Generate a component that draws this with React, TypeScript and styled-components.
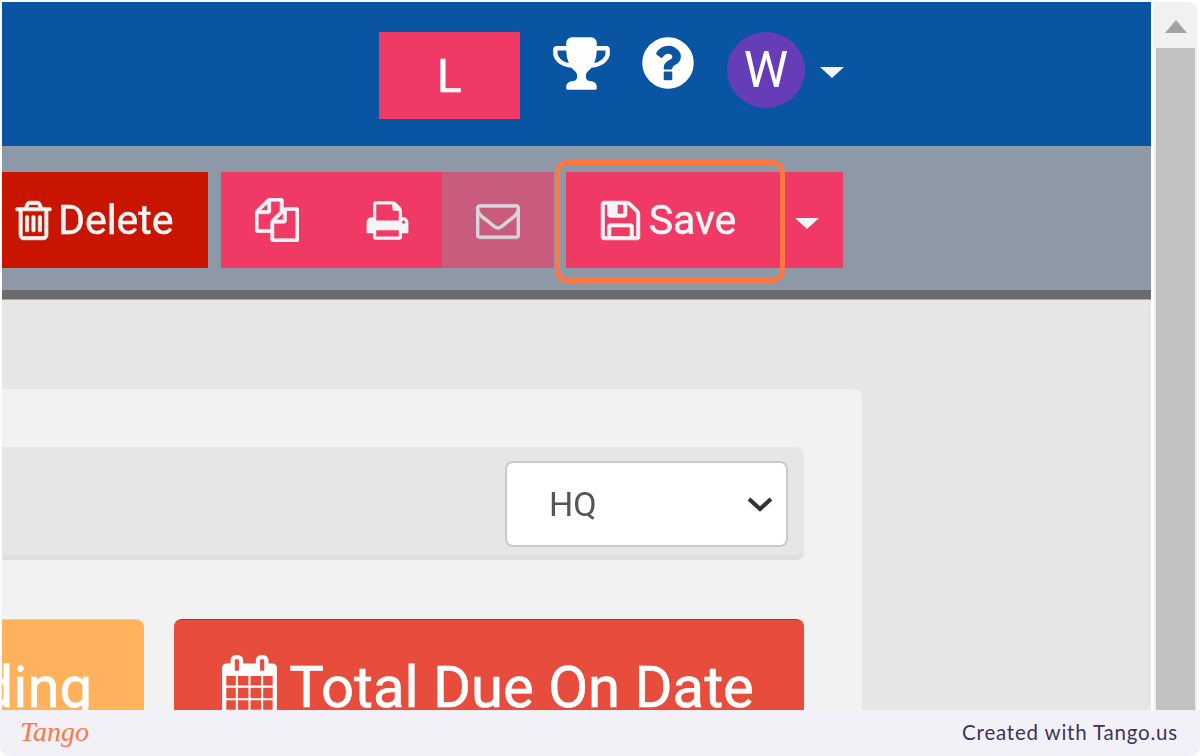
import React from "react";
import styled, { createGlobalStyle } from "styled-components";

const Global = createGlobalStyle`
  html, body { margin: 0; padding: 0; background: #fff; }
  * { box-sizing: border-box; }
`;

const Frame = styled.div`
  position: relative;
  width: 1200px;
  height: 756px;
  display: flex;
  flex-direction: column;
  overflow: hidden;
  background: #fff;
  font-family: Roboto, "Liberation Sans", sans-serif;
`;
const Shot = styled.div`
  height: 710px;
  display: flex;
  padding: 2px 0 0 2px;
  filter: blur(0.6px);
`;
const Main = styled.div`
  width: 1149px;
  display: flex;
  flex-direction: column;
  overflow: hidden;
  background: #e6e6e6;
`;
const Gutter = styled.div`
  width: 3px;
  background: #fff;
`;
const Scrollbar = styled.div`
  width: 43px;
  display: flex;
  flex-direction: column;
  background: #f1f1f1;
  border-radius: 0 8px 0 0;
`;
const ScrollUp = styled.div`
  height: 46px;
  padding-top: 18px;
  display: flex;
  align-items: flex-start;
  justify-content: center;
  &::before {
    content: "";
    border-left: 11px solid transparent;
    border-right: 11px solid transparent;
    border-bottom: 13px solid #a3a3a3;
  }
`;
const Thumb = styled.div`
  flex: 1;
  margin: 0 2px;
  background: #c1c1c1;
`;
const Header = styled.header`
  height: 144px;
  flex: none;
  display: flex;
  align-items: flex-start;
  padding: 30px 0 0 377px;
  background: #0955a3;
`;
const Letter = styled.div`
  width: 141px;
  height: 87px;
  display: flex;
  align-items: center;
  justify-content: center;
  background: #f03a65;
  color: #fff;
  font-size: 46px;
  -webkit-text-stroke: 0.5px #fff;
`;
const TrophySlot = styled.span`
  display: flex;
  margin: 1px 0 0 31px;
  color: #fff;
`;
const HelpSlot = styled.span`
  display: flex;
  margin: 1px 0 0 26px;
  color: #fff;
`;
const Avatar = styled.div`
  width: 78px;
  height: 76px;
  margin-left: 29px;
  border-radius: 50%;
  display: flex;
  align-items: center;
  justify-content: center;
  background: #663db8;
  color: #fff;
  font-size: 50px;
`;
const Caret = styled.span<{ $top: number }>`
  width: 0;
  height: 0;
  margin-top: ${(p) => p.$top}px;
  border-left: 12px solid transparent;
  border-right: 12px solid transparent;
  border-top: 11px solid #f2f4f5;
`;
const HeaderCaret = styled(Caret)`
  margin-left: 15px;
`;
const Toolbar = styled.div`
  height: 144px;
  flex: none;
  display: flex;
  align-items: flex-start;
  padding-top: 26px;
  background: #8d99a6;
`;
const Rule = styled.div`
  height: 10px;
  flex: none;
  background: #6b6b6b;
  border-bottom: 1px solid #a8a8a8;
`;
const Btn = styled.div<{ $w: number; $gap?: number }>`
  width: ${(p) => p.$w}px;
  height: 96px;
  margin-left: ${(p) => p.$gap ?? 0}px;
  display: flex;
  align-items: center;
  justify-content: center;
  background: #f03a65;
  color: #f2f4f5;
  font-size: 41px;
  -webkit-text-stroke: 0.5px #f2f4f5;
`;
const DeleteBtn = styled(Btn)`
  justify-content: flex-start;
  gap: 2px;
  padding-left: 9px;
  background: #c91400;
`;
const MailBtn = styled(Btn)`
  background: #c95c7d;
  color: #d5d5da;
`;
const SaveBtn = styled(Btn)`
  gap: 6px;
  padding-right: 12px;
`;
const CaretBtn = styled(Btn)`
  padding-right: 10px;
`;
const Glyph = styled.svg<{ $s: number; $bold?: number }>`
  width: ${(p) => p.$s}px;
  height: ${(p) => p.$s}px;
  flex: none;
  fill: currentColor;
  stroke: currentColor;
  stroke-width: ${(p) => p.$bold ?? 0};
`;
const Body = styled.div`
  flex: 1;
  min-height: 0;
  padding: 89px 0 0;
`;
const Card = styled.section`
  width: 890px;
  height: 400px;
  margin-left: -30px;
  padding: 58px 58px 0 0;
  background: #f2f2f2;
  border-radius: 8px;
`;
const FilterBar = styled.div`
  height: 113px;
  display: flex;
  justify-content: flex-end;
  padding: 14px 16px 0 0;
  background: #e6e6e6;
  border-bottom: 5px solid #dfdfdf;
  border-radius: 8px;
`;
const SelectBox = styled.div`
  width: 283px;
  height: 86px;
  display: flex;
  align-items: center;
  justify-content: space-between;
  padding: 0 13px 0 42px;
  background: #fff;
  border: 2px solid #c9c9c9;
  border-radius: 8px;
  color: #555;
  font-size: 34px;
`;
const Chevron = styled.svg`
  width: 26px;
  height: 17px;
  fill: none;
  stroke: #333;
  stroke-width: 4;
`;
const Tiles = styled.div`
  display: flex;
  gap: 30px;
  margin-top: 59px;
`;
const Tile = styled.div<{ $bg: string; $edge: string; $w: number }>`
  width: ${(p) => p.$w}px;
  height: 150px;
  flex: none;
  display: flex;
  justify-content: center;
  gap: 10px;
  padding: 33px 4px 0 0;
  overflow: hidden;
  background: ${(p) => p.$bg};
  border-top: 1px solid ${(p) => p.$edge};
  border-radius: 8px;
  color: #fff;
  font-size: 58px;
  line-height: 68px;
  white-space: nowrap;
  -webkit-text-stroke: 0.6px #fff;
`;
const PendingTile = styled(Tile)`
  justify-content: flex-end;
  padding-right: 52px;
`;
const CalendarSlot = styled.span`
  display: flex;
  margin-top: 2px;
`;
const Highlight = styled.div`
  position: absolute;
  left: 555px;
  top: 160px;
  width: 230px;
  height: 123px;
  border: 5px solid #ff7843;
  border-radius: 13px;
`;
const Footer = styled.footer`
  height: 46px;
  flex: none;
  display: flex;
  align-items: center;
  justify-content: space-between;
  padding: 0 22px 2px 20px;
  background: #f3f1f8;
  border-radius: 0 0 10px 10px;
`;
const Logo = styled.span`
  font-family: "Liberation Serif", serif;
  font-style: italic;
  font-size: 28px;
  color: #ff7843;
`;
const Credit = styled.span`
  font-family: Lato, sans-serif;
  font-size: 20.5px;
  letter-spacing: 0.8px;
  color: #3f3359;
`;

const TRASH = "M704 736v576q0 14-9 23t-23 9h-64q-14 0-23-9t-9-23v-576q0-14 9-23t23-9h64q14 0 23 9t9 23zm256 0v576q0 14-9 23t-23 9h-64q-14 0-23-9t-9-23v-576q0-14 9-23t23-9h64q14 0 23 9t9 23zm256 0v576q0 14-9 23t-23 9h-64q-14 0-23-9t-9-23v-576q0-14 9-23t23-9h64q14 0 23 9t9 23zm128 724v-948h-896v948q0 22 7 40.5t14.5 27 10.5 8.5h832q3 0 10.5-8.5t14.5-27 7-40.5zm-672-1076h448l-48-117q-7-9-17-11h-317q-10 2-17 11zm928 32v64q0 14-9 23t-23 9h-96v948q0 83-47 143.5t-113 60.5h-832q-66 0-113-58.5t-47-141.5v-952h-96q-14 0-23-9t-9-23v-64q0-14 9-23t23-9h309l70-167q15-37 54-63t79-26h320q40 0 79 26t54 63l70 167h309q14 0 23 9t9 23z";
const FILES = "M1696 384q40 0 68 28t28 68v1216q0 40-28 68t-68 28h-960q-40 0-68-28t-28-68v-288h-544q-40 0-68-28t-28-68v-672q0-40 20-88t48-76l408-408q28-28 76-48t88-20h416q40 0 68 28t28 68v328q68-40 128-40h416zm-544 213l-299 299h299v-299zm-640-384l-299 299h299v-299zm196 647l316-316v-416h-384v416q0 40-28 68t-68 28h-416v640h512v-256q0-40 20-88t48-76zm956 804v-1152h-384v416q0 40-28 68t-68 28h-416v640h896z";
const SAVE = "M512 1536h768v-384h-768v384zm896 0h128v-896q0-14-10-38.5t-20-34.5l-281-281q-10-10-34-20t-39-10v416q0 40-28 68t-68 28h-576q-40 0-68-28t-28-68v-416h-128v1280h128v-416q0-40 28-68t68-28h832q40 0 68 28t28 68v416zm-384-928v-320q0-13-9.5-22.5t-22.5-9.5h-192q-13 0-22.5 9.5t-9.5 22.5v320q0 13 9.5 22.5t22.5 9.5h192q13 0 22.5-9.5t9.5-22.5zm640 32v928q0 40-28 68t-68 28h-1344q-40 0-68-28t-28-68v-1344q0-40 28-68t68-28h928q40 0 88 20t76 48l280 280q28 28 48 76t20 88z";
const CAL = "M192 1664h288v-288h-288v288zm352 0h320v-288h-320v288zm-352-352h288v-320h-288v320zm352 0h320v-320h-320v320zm-352-384h288v-288h-288v288zm736 736h320v-288h-320v288zm-384-736h320v-288h-320v288zm768 736h288v-288h-288v288zm-384-352h320v-320h-320v320zm-352-864v-288q0-13-9.5-22.5t-22.5-9.5h-64q-13 0-22.5 9.5t-9.5 22.5v288q0 13 9.5 22.5t22.5 9.5h64q13 0 22.5-9.5t9.5-22.5zm736 864h288v-320h-288v320zm-384-384h320v-288h-320v288zm384 0h288v-288h-288v288zm32-480v-288q0-13-9.5-22.5t-22.5-9.5h-64q-13 0-22.5 9.5t-9.5 22.5v288q0 13 9.5 22.5t22.5 9.5h64q13 0 22.5-9.5t9.5-22.5zm384-64v1280q0 52-38 90t-90 38h-1408q-52 0-90-38t-38-90v-1280q0-52 38-90t90-38h128v-96q0-66 47-113t113-47h64q66 0 113 47t47 113v96h384v-96q0-66 47-113t113-47h64q66 0 113 47t47 113v96h128q52 0 90 38t38 90z";
const PRINT = "M448 1536h896v-256h-896v256zm0-640h896v-384h-160q-40 0-68-28t-28-68v-160h-640v640zm1152 64q0-26-19-45t-45-19-45 19-19 45 19 45 45 19 45-19 19-45zm128 0v416q0 13-9.5 22.5t-22.5 9.5h-224v160q0 40-28 68t-68 28h-960q-40 0-68-28t-28-68v-160h-224q-13 0-22.5-9.5t-9.5-22.5v-416q0-79 56.5-135.5t135.5-56.5h64v-544q0-40 28-68t68-28h672q40 0 88 20t76 48l152 152q28 28 48 76t20 88v256h64q79 0 135.5 56.5t56.5 135.5z";
const MAIL = "M1664 1504v-768q-32 36-69 66-268 206-426 338-51 43-83 67t-86.5 48.5-102.5 24.5h-2q-48 0-102.5-24.5t-86.5-48.5-83-67q-158-132-426-338-37-30-69-66v768q0 13 9.5 22.5t22.5 9.5h1472q13 0 22.5-9.5t9.5-22.5zm0-1051v-24.5l-.5-13-3-12.5-5.5-9-9-7.5-14-2.5h-1472q-13 0-22.5 9.5t-9.5 22.5q0 168 147 284 193 152 401 317 6 5 35 29.5t46 37.5 44.5 31.5 50.5 27.5 43 9h2q20 0 43-9t50.5-27.5 44.5-31.5 46-37.5 35-29.5q208-165 401-317 54-43 100.5-115.5t46.5-131.5zm128-37v1088q0 66-47 113t-113 47h-1472q-66 0-113-47t-47-113v-1088q0-66 47-113t113-47h1472q66 0 113 47t47 113z";
const TROPHY = "M522 883q-74-162-74-371h-256v96q0 78 94.5 162t235.5 113zm1078-275v-96h-256q0 209-74 371 141-29 235.5-113t94.5-162zm128-128v128q0 71-41.5 143t-112 130-173 97.5-215.5 44.5q-42 54-95 95-38 34-52.5 72.5t-14.5 89.5q0 54 30.5 91t97.5 37q75 0 133.5 45.5t58.5 114.5v64q0 14-9 23t-23 9h-832q-14 0-23-9t-9-23v-64q0-69 58.5-114.5t133.5-45.5q67 0 97.5-37t30.5-91q0-51-14.5-89.5t-52.5-72.5q-53-41-95-95-113-5-215.5-44.5t-173-97.5-112-130-41.5-143v-128q0-40 28-68t68-28h288v-96q0-66 47-113t113-47h576q66 0 113 47t47 113v96h288q40 0 68 28t28 68z";
const HELP = "M1024 1376v-192q0-14-9-23t-23-9h-192q-14 0-23 9t-9 23v192q0 14 9 23t23 9h192q14 0 23-9t9-23zm256-672q0-88-55.5-163t-138.5-116-170-41q-243 0-371 213-15 24 8 42l132 100q7 6 19 6 16 0 25-12 53-68 86-92 34-24 86-24 48 0 85.5 26t37.5 59q0 38-20 61t-68 45q-63 28-115.5 86.5t-52.5 125.5v36q0 14 9 23t23 9h192q14 0 23-9t9-23q0-19 21.5-49.5t54.5-49.5q32-18 49-28.5t46-35 44.5-48 28-60.5 12.5-81zm384 192q0 209-103 385.5t-279.5 279.5-385.5 103-385.5-103-279.5-279.5-103-385.5 103-385.5 279.5-279.5 385.5-103 385.5 103 279.5 279.5 103 385.5z";

const Icon = ({ d, s, bold }: { d: string; s: number; bold?: number }) => (
  <Glyph $s={s} $bold={bold} viewBox="0 0 1792 1792"><path d={d} /></Glyph>
);

export default function App() {
  return (
    <Frame>
      <Global />
      <Shot>
        <Main>
          <Header>
            <Letter>L</Letter>
            <TrophySlot><Icon d={TROPHY} s={61} /></TrophySlot>
            <HelpSlot><Icon d={HELP} s={60} /></HelpSlot>
            <Avatar>W</Avatar>
            <HeaderCaret $top={35} />
          </Header>
          <Toolbar>
            <DeleteBtn $w={206}><Icon d={TRASH} s={45} bold={30} />Delete</DeleteBtn>
            <Btn $w={111} $gap={13}><Icon d={FILES} s={44} bold={30} /></Btn>
            <Btn $w={110}><Icon d={PRINT} s={45} /></Btn>
            <MailBtn $w={112}><Icon d={MAIL} s={44} bold={20} /></MailBtn>
            <SaveBtn $w={214} $gap={12}><Icon d={SAVE} s={45} bold={30} />Save</SaveBtn>
            <CaretBtn $w={63}><Caret $top={6} /></CaretBtn>
          </Toolbar>
          <Rule />
          <Body>
            <Card>
              <FilterBar>
                <SelectBox>
                  HQ
                  <Chevron viewBox="0 0 26 17"><path d="M2 3l11 10L24 3" /></Chevron>
                </SelectBox>
              </FilterBar>
              <Tiles>
                <PendingTile $w={172} $bg="#ffb25b" $edge="#ffc98c">Outstanding</PendingTile>
                <Tile $w={630} $bg="#e74c3c" $edge="#f01c00"><CalendarSlot><Icon d={CAL} s={59} /></CalendarSlot>Total Due On Date</Tile>
              </Tiles>
            </Card>
          </Body>
        </Main>
        <Gutter />
        <Scrollbar>
          <ScrollUp />
          <Thumb />
        </Scrollbar>
      </Shot>
      <Footer>
        <Logo>Tango</Logo>
        <Credit>Created with Tango.us</Credit>
      </Footer>
      <Highlight />
    </Frame>
  );
}
